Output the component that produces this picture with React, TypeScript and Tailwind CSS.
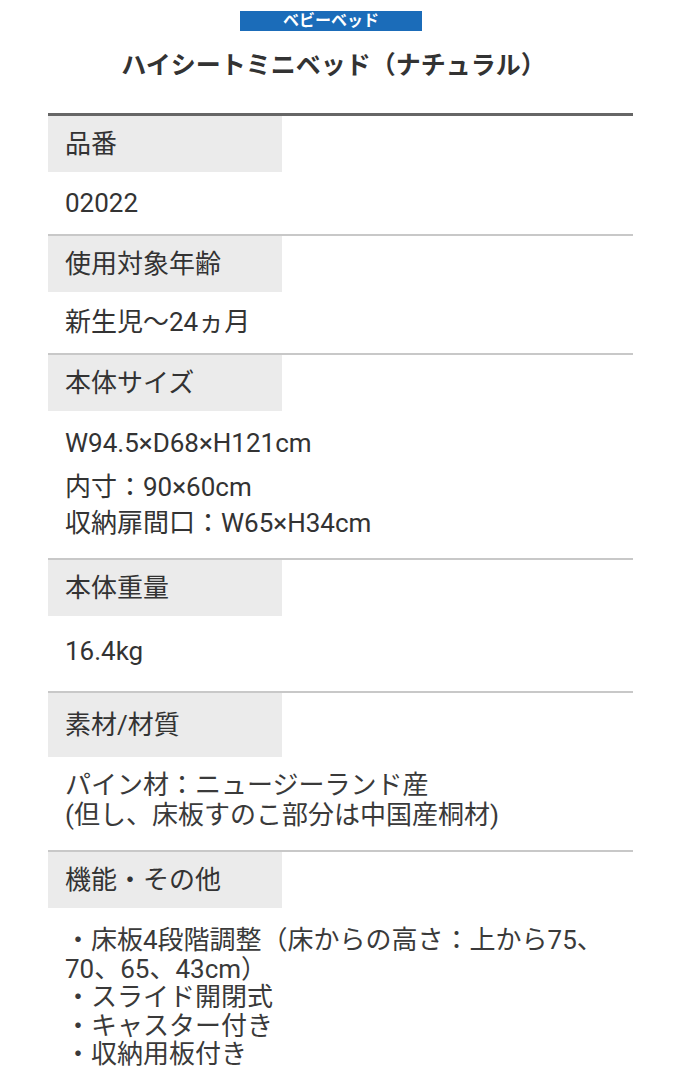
import React from 'react';

type Spec = {
    label: string;
    labelH: string;
    value: React.ReactNode;
    valueClass: string;
};

const specs: Spec[] = [
    { label: '品番', labelH: 'h-[56px]', value: <p className="leading-[30px]">02022</p>, valueClass: 'pt-[16px] pb-[16px]' },
    { label: '使用対象年齢', labelH: 'h-[56px]', value: <p className="leading-[30px]">新生児〜24ヵ月</p>, valueClass: 'pt-[15px] pb-[16px]' },
    {
        label: '本体サイズ',
        labelH: 'h-[56px]',
        value: (
            <>
                <p className="leading-[30px]">W94.5×D68×H121cm</p>
                <p className="leading-[36px] mt-[11px]">内寸：90×60cm</p>
                <p className="leading-[36px]">収納扉間口：W65×H34cm</p>
            </>
        ),
        valueClass: 'pt-[17px] pb-[17px]',
    },
    { label: '本体重量', labelH: 'h-[56px]', value: <p className="leading-[30px]">16.4kg</p>, valueClass: 'pt-[20px] pb-[25px]' },
    {
        label: '素材/材質',
        labelH: 'h-[64px]',
        value: (
            <p className="leading-[30px] text-[#3a3a3a]">
                パイン材：ニュージーランド産<br />(但し、床板すのこ部分は中国産桐材)
            </p>
        ),
        valueClass: 'pt-[13px] pb-[20px]',
    },
    {
        label: '機能・その他',
        labelH: 'h-[56px]',
        value: (
            <p className="leading-[28.5px] text-[#3a3a3a]">
                ・床板4段階調整（床からの高さ：上から75、<br />
                70、65、43cm）<br />
                ・スライド開閉式<br />
                ・キャスター付き<br />
                ・収納用板付き
            </p>
        ),
        valueClass: 'pt-[18px] pb-[20px]',
    },
];

const App: React.FC = () => {
    return (
        <div className="min-h-[1080px] bg-white text-[#333] font-['Roboto','Noto_Sans_CJK_JP',sans-serif]">
            <div className="ml-[48px] w-[585px] pt-[11px]">
                {/* Category badge + title */}
                <div className="flex justify-center pr-[19px]">
                    <span className="block w-[182px] h-[20px] bg-[#1b6cb9] text-white text-[16px] font-bold leading-[20px] text-center">ベビーベッド</span>
                </div>
                <h1 className="mt-[20px] pr-[14px] text-center text-[25px] font-bold leading-[30px] text-[#333]">ハイシートミニベッド（ナチュラル）</h1>

                {/* Spec table */}
                <div className="mt-[32px] border-t-[3px] border-[#666]">
                    {specs.map((s, i) => (
                        <div key={s.label} className={i === 0 ? '' : 'border-t-2 border-[#c8c8c8]'}>
                            <div className={`w-[40%] ${s.labelH} bg-[#ebebeb] flex items-center px-[17px] text-[26px]`}>{s.label}</div>
                            <div className={`px-[17px] text-[26px] ${s.valueClass}`}>{s.value}</div>
                        </div>
                    ))}
                </div>
            </div>
        </div>
    );
};

export default App;
